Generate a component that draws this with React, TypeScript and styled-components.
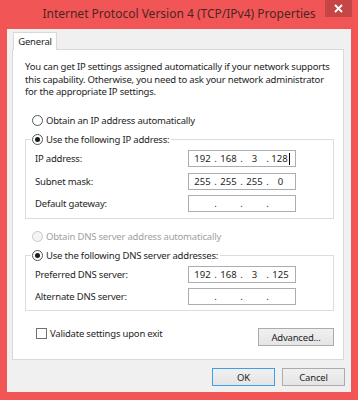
import React from 'react';
import styled, { createGlobalStyle } from 'styled-components';

const GlobalStyle = createGlobalStyle`
  html, body {
    margin: 0;
    padding: 0;
    background: #ffffff;
  }
  body {
    font-family: "Noto Sans", "Open Sans", "DejaVu Sans", sans-serif;
    font-size: 9.5px;
    letter-spacing: -0.2px;
    color: #1e1e1e;
  }
`;

const Window = styled.div`
  width: 358px;
  height: 400px;
  background: #f25555;
  display: flex;
  flex-direction: column;
  box-sizing: border-box;
`;

const TitleBar = styled.div`
  height: 30px;
  display: grid;
  grid-template-columns: 1fr auto 1fr;
  align-items: start;
`;

const Title = styled.div`
  grid-column: 2;
  margin-top: 5px;
  font-size: 12px;
  letter-spacing: 0;
  line-height: 18px;
  color: #4a2626;
  white-space: nowrap;
`;

const CloseButton = styled.div`
  grid-column: 3;
  justify-self: end;
  margin-right: 6px;
  width: 27px;
  height: 17px;
  background: #c64648;
  display: flex;
  align-items: center;
  justify-content: center;
`;

const Client = styled.div`
  flex: 1;
  margin: 0 7px 8px 7px;
  background: #f0f0f0;
  display: flex;
  flex-direction: column;
  padding: 3px 6px 6px 5px;
`;

const TabStrip = styled.div`
  display: flex;
  padding-left: 1px;
`;

const Tab = styled.div`
  width: 44px;
  height: 18px;
  box-sizing: border-box;
  border: 1px solid #d9d9d9;
  border-bottom: none;
  background: #ffffff;
  margin-bottom: -1px;
  position: relative;
  z-index: 1;
  display: flex;
  align-items: center;
  justify-content: center;
  padding-bottom: 1px;
`;

const Panel = styled.div`
  width: 332px;
  height: 311px;
  box-sizing: border-box;
  border: 1px solid #d9d9d9;
  background: #ffffff;
  padding: 11px 9px 0 12px;
  display: flex;
  flex-direction: column;
`;

const Intro = styled.p`
  margin: 0;
  line-height: 12.5px;
  white-space: nowrap;
`;

const OptionRow = styled.label<{ $top?: number }>`
  display: flex;
  align-items: center;
  height: 16px;
  margin-top: ${p => p.$top ?? 0}px;
  padding-left: 7px;
`;

const Radio = styled.span<{ $checked?: boolean; $disabled?: boolean }>`
  width: 11px;
  height: 11px;
  box-sizing: border-box;
  border-radius: 50%;
  border: 1px solid ${p => (p.$disabled ? '#c8c8c8' : '#555555')};
  background: ${p => (p.$disabled ? '#f4f4f4' : '#ffffff')};
  display: flex;
  align-items: center;
  justify-content: center;
  margin-right: 3px;
  &::after {
    content: '';
    width: 5px;
    height: 5px;
    border-radius: 50%;
    background: #1a1a1a;
    display: ${p => (p.$checked ? 'block' : 'none')};
  }
`;

const OptionText = styled.span<{ $disabled?: boolean }>`
  color: ${p => (p.$disabled ? '#a0a0a0' : '#1e1e1e')};
  white-space: nowrap;
`;

const Group = styled.fieldset<{ $top: number; $bottom: number }>`
  margin: ${p => p.$top}px 0 0 0;
  padding: 0 37px ${p => p.$bottom}px 0;
  border: 1px solid #dcdcdc;
  min-width: 0;
`;

const Legend = styled.legend`
  margin-left: 5px;
  padding: 0 2px 0 1px;
  height: 16px;
  display: flex;
  align-items: center;
`;

const FieldRow = styled.div`
  display: grid;
  grid-template-columns: 1fr 108px;
  align-items: center;
  height: 22.5px;
  padding-left: 9px;
`;

const IpBox = styled.div`
  width: 108px;
  height: 17px;
  box-sizing: border-box;
  border: 1px solid #abadb3;
  background: #ffffff;
  display: flex;
  align-items: center;
  padding-left: 3px;
  letter-spacing: 0;
`;

const Octet = styled.span`
  width: 21px;
  text-align: center;
`;

const Dot = styled.span`
  width: 5px;
  text-align: center;
`;

const Caret = styled.span`
  display: inline-block;
  width: 1px;
  height: 12px;
  background: #000000;
  vertical-align: middle;
  margin-left: 1px;
`;

const BottomRow = styled.div`
  display: flex;
  justify-content: space-between;
  align-items: flex-start;
  margin-top: 16px;
`;

const CheckRow = styled.label`
  display: flex;
  align-items: center;
  height: 12px;
  padding-left: 11px;
`;

const Checkbox = styled.span`
  width: 11px;
  height: 11px;
  box-sizing: border-box;
  border: 1px solid #707070;
  background: #ffffff;
  margin-right: 3px;
`;

const Button = styled.div<{ $width: number; $default?: boolean }>`
  width: ${p => p.$width}px;
  height: 18px;
  box-sizing: border-box;
  border: 1px solid ${p => (p.$default ? '#3c9fe8' : '#acacac')};
  background: linear-gradient(#f0f0f0, #e5e5e5);
  display: flex;
  align-items: center;
  justify-content: center;
  color: #1e1e1e;
`;

const AdvancedButton = styled(Button)`
  margin-top: 1px;
`;

const DialogButtons = styled.div`
  display: flex;
  justify-content: flex-end;
  gap: 7px;
  margin-top: 8px;
`;

const IpField = ({ parts, caret }: { parts: string[]; caret?: boolean }) => (
  <IpBox>
    {parts.map((part, i) => (
      <React.Fragment key={i}>
        {i > 0 && <Dot>.</Dot>}
        <Octet>
          {part}
          {caret && i === parts.length - 1 && <Caret />}
        </Octet>
      </React.Fragment>
    ))}
  </IpBox>
);

const empty = ['', '', '', ''];

export default function App() {
  return (
    <>
      <GlobalStyle />
      <Window>
        <TitleBar>
          <Title>Internet Protocol Version 4 (TCP/IPv4) Properties</Title>
          <CloseButton>
            <svg width="9" height="9" viewBox="0 0 9 9">
              <path d="M1 1 L8 8 M8 1 L1 8" stroke="#ffffff" strokeWidth="1.8" />
            </svg>
          </CloseButton>
        </TitleBar>
        <Client>
          <TabStrip>
            <Tab>General</Tab>
          </TabStrip>
          <Panel>
            <Intro>
              You can get IP settings assigned automatically if your network supports
              <br />
              this capability. Otherwise, you need to ask your network administrator
              <br />
              for the appropriate IP settings.
            </Intro>

            <OptionRow $top={14}>
              <Radio />
              <OptionText>Obtain an IP address automatically</OptionText>
            </OptionRow>

            <Group $top={3} $bottom={3}>
              <Legend>
                <Radio $checked />
                <OptionText>Use the following IP address:</OptionText>
              </Legend>
              <FieldRow>
                <span>IP address:</span>
                <IpField parts={['192', '168', '3', '128']} caret />
              </FieldRow>
              <FieldRow>
                <span>Subnet mask:</span>
                <IpField parts={['255', '255', '255', '0']} />
              </FieldRow>
              <FieldRow>
                <span>Default gateway:</span>
                <IpField parts={empty} />
              </FieldRow>
            </Group>

            <OptionRow $top={9}>
              <Radio $disabled />
              <OptionText $disabled>Obtain DNS server address automatically</OptionText>
            </OptionRow>

            <Group $top={3} $bottom={2}>
              <Legend>
                <Radio $checked />
                <OptionText>Use the following DNS server addresses:</OptionText>
              </Legend>
              <FieldRow>
                <span>Preferred DNS server:</span>
                <IpField parts={['192', '168', '3', '125']} />
              </FieldRow>
              <FieldRow>
                <span>Alternate DNS server:</span>
                <IpField parts={empty} />
              </FieldRow>
            </Group>

            <BottomRow>
              <CheckRow>
                <Checkbox />
                <OptionText>Validate settings upon exit</OptionText>
              </CheckRow>
              <AdvancedButton $width={76}>Advanced...</AdvancedButton>
            </BottomRow>
          </Panel>
          <DialogButtons>
            <Button $width={63} $default>OK</Button>
            <Button $width={63}>Cancel</Button>
          </DialogButtons>
        </Client>
      </Window>
    </>
  );
}
